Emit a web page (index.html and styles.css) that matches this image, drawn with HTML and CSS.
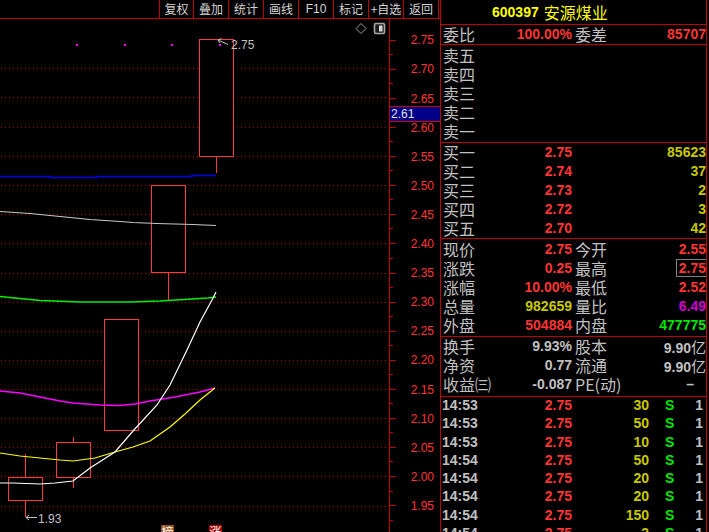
FILE: index.html
```html
<!DOCTYPE html>
<html lang="zh-CN">
<head>
<meta charset="utf-8">
<title>600397 安源煤业</title>
<link rel="stylesheet" href="styles.css">
</head>
<body>
<div class="app">
  <div class="left">
    <div class="toolbar">
      <span class="tb first">复权</span>
      <span class="tb">叠加</span>
      <span class="tb">统计</span>
      <span class="tb">画线</span>
      <span class="tb lat">F10</span>
      <span class="tb">标记</span>
      <span class="tb">+自选</span>
      <span class="tb last">返回</span>
    </div>
    <svg class="chart" width="440" height="513" viewBox="0 19 440 513">
      <g class="grid">
        <line x1="1" x2="389" y1="68.5" y2="68.5"/>
        <line x1="1" x2="389" y1="97.5" y2="97.5"/>
        <line x1="1" x2="389" y1="127.5" y2="127.5"/>
        <line x1="1" x2="389" y1="156.5" y2="156.5"/>
        <line x1="1" x2="389" y1="185.5" y2="185.5"/>
        <line x1="1" x2="389" y1="214.5" y2="214.5"/>
        <line x1="1" x2="389" y1="243.5" y2="243.5"/>
        <line x1="1" x2="389" y1="273.5" y2="273.5"/>
        <line x1="1" x2="389" y1="302.5" y2="302.5"/>
        <line x1="1" x2="389" y1="331.5" y2="331.5"/>
        <line x1="1" x2="389" y1="360.5" y2="360.5"/>
        <line x1="1" x2="389" y1="389.5" y2="389.5"/>
        <line x1="1" x2="389" y1="418.5" y2="418.5"/>
        <line x1="1" x2="389" y1="447.5" y2="447.5"/>
        <line x1="1" x2="389" y1="476.5" y2="476.5"/>
        <line x1="1" x2="389" y1="506.5" y2="506.5"/>
      </g>

      <polyline class="ma ma-blue" points="0,176.5 50,176.5 50,177.5 97,177.5 97,176.5 192,176.5 192,175.5 216,175.5"/>

      <g class="candles">
        <line class="wick" x1="25.5" x2="25.5" y1="454" y2="477"/>
        <line class="wick" x1="25.5" x2="25.5" y1="501" y2="517"/>
        <rect class="candle" x="8.5" y="477.5" width="34" height="23"/>
        <line class="wick" x1="73.5" x2="73.5" y1="437" y2="442"/>
        <line class="wick" x1="73.5" x2="73.5" y1="478" y2="488"/>
        <rect class="candle" x="56.5" y="442.5" width="34" height="35"/>
        <rect class="candle" x="104.5" y="319.5" width="34" height="111"/>
        <line class="wick" x1="168.5" x2="168.5" y1="273" y2="301"/>
        <rect class="candle" x="151.5" y="185.5" width="34" height="87"/>
        <line class="wick" x1="216.5" x2="216.5" y1="157" y2="173"/>
        <rect class="candle" x="199.5" y="39.5" width="34" height="117"/>
      </g>

      <polyline class="ma ma-gray" points="0,211.5 30,213.5 60,216.5 90,219.5 120,221.5 133,222.5 157,223.5 193,224.5 216,225.5"/>
      <polyline class="ma ma-green" points="0,296.5 40,300.5 80,302 130,302 160,301 176,300 192,299 208,298 216,297"/>
      <polyline class="ma ma-magenta" points="0,391 20,393 40,397 60,401 73,403 100,405 120,405.5 135,404 150,401 175,397 200,392 215,388"/>
      <polyline class="ma ma-yellow" points="0,453 20,456 40,458 60,460 73,461 95,458 115,452 133,447 150,441 170,427 185,414 200,400 215,388"/>
      <polyline class="ma ma-white" points="0,483 13,483 40,484 55,483 73,481 90,468 115,452 133,431 157,405 170,385 187,350 200,322 212,300 216,292"/>

      <g class="dots">
        <rect x="76" y="44" width="2" height="2"/>
        <rect x="124" y="44" width="2" height="2"/>
        <rect x="171" y="44" width="2" height="2"/>
        <rect x="219" y="44" width="2" height="2"/>
      </g>

      <path class="arrow" d="M218 40 L228 44.5 M218 40 L221.5 38.5 M218 40 L220 43"/>
      <text class="ann" x="231" y="48.6">2.75</text>
      <path class="arrow" d="M26 517.5 L37 517.5 M26 517.5 L29 515 M26 517.5 L29 520"/>
      <text class="ann" x="38" y="523">1.93</text>

      <polygon class="icon" points="361,23.5 366,28.5 361,33.5 356,28.5"/>
      <rect class="icon-frame" x="374.5" y="23.5" width="10" height="10" rx="1.5"/>
      <rect class="icon-fill" x="379" y="25.5" width="3.5" height="6"/>

      <rect class="badge-b" x="161" y="525" width="13" height="13"/>
      <text class="badge-t" x="161.5" y="536.5">榜</text>
      <rect class="badge-r" x="209" y="525" width="13" height="13"/>
      <text class="badge-t" x="209.5" y="536.5">涨</text>

      <line class="axis-line" x1="389.5" x2="389.5" y1="19" y2="532"/>
      <g class="ticks">
        <line x1="390" x2="396" y1="40.5" y2="40.5"/>
        <line x1="390" x2="393" y1="54.5" y2="54.5"/>
        <line x1="390" x2="396" y1="69.5" y2="69.5"/>
        <line x1="390" x2="393" y1="83.5" y2="83.5"/>
        <line x1="390" x2="396" y1="98.5" y2="98.5"/>
        <line x1="390" x2="396" y1="127.5" y2="127.5"/>
        <line x1="390" x2="393" y1="141.5" y2="141.5"/>
        <line x1="390" x2="396" y1="156.5" y2="156.5"/>
        <line x1="390" x2="393" y1="170.5" y2="170.5"/>
        <line x1="390" x2="396" y1="185.5" y2="185.5"/>
        <line x1="390" x2="393" y1="199.5" y2="199.5"/>
        <line x1="390" x2="396" y1="214.5" y2="214.5"/>
        <line x1="390" x2="393" y1="228.5" y2="228.5"/>
        <line x1="390" x2="396" y1="243.5" y2="243.5"/>
        <line x1="390" x2="393" y1="258.5" y2="258.5"/>
        <line x1="390" x2="396" y1="273.5" y2="273.5"/>
        <line x1="390" x2="393" y1="287.5" y2="287.5"/>
        <line x1="390" x2="396" y1="302.5" y2="302.5"/>
        <line x1="390" x2="393" y1="316.5" y2="316.5"/>
        <line x1="390" x2="396" y1="331.5" y2="331.5"/>
        <line x1="390" x2="393" y1="345.5" y2="345.5"/>
        <line x1="390" x2="396" y1="360.5" y2="360.5"/>
        <line x1="390" x2="393" y1="374.5" y2="374.5"/>
        <line x1="390" x2="396" y1="389.5" y2="389.5"/>
        <line x1="390" x2="393" y1="403.5" y2="403.5"/>
        <line x1="390" x2="396" y1="418.5" y2="418.5"/>
        <line x1="390" x2="393" y1="432.5" y2="432.5"/>
        <line x1="390" x2="396" y1="447.5" y2="447.5"/>
        <line x1="390" x2="393" y1="461.5" y2="461.5"/>
        <line x1="390" x2="396" y1="476.5" y2="476.5"/>
        <line x1="390" x2="393" y1="491.5" y2="491.5"/>
        <line x1="390" x2="396" y1="505.5" y2="505.5"/>
        <line x1="390" x2="393" y1="520.5" y2="520.5"/>
      </g>
      <g class="axlbl">
        <text x="434" y="44.3">2.75</text>
        <text x="434" y="73.4">2.70</text>
        <text x="434" y="102.5">2.65</text>
        <text x="434" y="131.6">2.60</text>
        <text x="434" y="160.7">2.55</text>
        <text x="434" y="189.8">2.50</text>
        <text x="434" y="218.9">2.45</text>
        <text x="434" y="248">2.40</text>
        <text x="434" y="277.1">2.35</text>
        <text x="434" y="306.2">2.30</text>
        <text x="434" y="335.3">2.25</text>
        <text x="434" y="364.4">2.20</text>
        <text x="434" y="393.5">2.15</text>
        <text x="434" y="422.6">2.10</text>
        <text x="434" y="451.7">2.05</text>
        <text x="434" y="480.8">2.00</text>
        <text x="434" y="509.9">1.95</text>
      </g>
      <rect class="cur-box" x="390" y="106.5" width="50" height="15"/>
      <line class="cur-edge" x1="390" x2="440" y1="106.5" y2="106.5"/>
      <line class="cur-edge" x1="390" x2="440" y1="121.5" y2="121.5"/>
      <text class="cur-txt" x="391" y="118.4">2.61</text>
    </svg>
  </div>

  <div class="panel">
    <div class="title"><span class="code">600397</span><span class="name">安源煤业</span></div>

    <div class="sec wb">
      <div class="row"><span class="lb">委比</span><span class="v red">100.00%</span><span class="lb2">委差</span><span class="v red">85707</span></div>
    </div>

    <div class="sec s5">
      <div class="row"><span class="lb">卖五</span><span class="v"></span><span class="lb2"></span><span class="v"></span></div>
      <div class="row"><span class="lb">卖四</span><span class="v"></span><span class="lb2"></span><span class="v"></span></div>
      <div class="row"><span class="lb">卖三</span><span class="v"></span><span class="lb2"></span><span class="v"></span></div>
      <div class="row"><span class="lb">卖二</span><span class="v"></span><span class="lb2"></span><span class="v"></span></div>
      <div class="row"><span class="lb">卖一</span><span class="v"></span><span class="lb2"></span><span class="v"></span></div>
    </div>

    <div class="sec b5">
      <div class="row"><span class="lb">买一</span><span class="v red">2.75</span><span class="lb2"></span><span class="v yel">85623</span></div>
      <div class="row"><span class="lb">买二</span><span class="v red">2.74</span><span class="lb2"></span><span class="v yel">37</span></div>
      <div class="row"><span class="lb">买三</span><span class="v red">2.73</span><span class="lb2"></span><span class="v yel">2</span></div>
      <div class="row"><span class="lb">买四</span><span class="v red">2.72</span><span class="lb2"></span><span class="v yel">3</span></div>
      <div class="row"><span class="lb">买五</span><span class="v red">2.70</span><span class="lb2"></span><span class="v yel">42</span></div>
    </div>

    <div class="sec st1">
      <div class="row"><span class="lb">现价</span><span class="v red">2.75</span><span class="lb2">今开</span><span class="v red">2.55</span></div>
      <div class="row"><span class="lb">涨跌</span><span class="v red">0.25</span><span class="lb2">最高</span><span class="v red"><span class="hibox">2.75</span></span></div>
      <div class="row"><span class="lb">涨幅</span><span class="v red">10.00%</span><span class="lb2">最低</span><span class="v red">2.52</span></div>
      <div class="row"><span class="lb">总量</span><span class="v yel">982659</span><span class="lb2">量比</span><span class="v mag">6.49</span></div>
      <div class="row"><span class="lb">外盘</span><span class="v red">504884</span><span class="lb2">内盘</span><span class="v grn">477775</span></div>
    </div>

    <div class="sec st2">
      <div class="row"><span class="lb">换手</span><span class="v">9.93%</span><span class="lb2">股本</span><span class="v">9.90<span class="cj">亿</span></span></div>
      <div class="row"><span class="lb">净资</span><span class="v">0.77</span><span class="lb2">流通</span><span class="v">9.90<span class="cj">亿</span></span></div>
      <div class="row"><span class="lb">收益㈢</span><span class="v">-0.087</span><span class="lb2">PE(动)</span><span class="v dash">–</span></div>
    </div>

    <div class="ticks-list">
      <div class="trow"><span class="t">14:53</span><span class="p">2.75</span><span class="q">30</span><span class="bs">S</span><span class="n">1</span></div>
      <div class="trow"><span class="t">14:53</span><span class="p">2.75</span><span class="q">50</span><span class="bs">S</span><span class="n">1</span></div>
      <div class="trow"><span class="t">14:53</span><span class="p">2.75</span><span class="q">10</span><span class="bs">S</span><span class="n">1</span></div>
      <div class="trow"><span class="t">14:54</span><span class="p">2.75</span><span class="q">50</span><span class="bs">S</span><span class="n">1</span></div>
      <div class="trow"><span class="t">14:54</span><span class="p">2.75</span><span class="q">20</span><span class="bs">S</span><span class="n">1</span></div>
      <div class="trow"><span class="t">14:54</span><span class="p">2.75</span><span class="q">20</span><span class="bs">S</span><span class="n">1</span></div>
      <div class="trow"><span class="t">14:54</span><span class="p">2.75</span><span class="q">150</span><span class="bs">S</span><span class="n">1</span></div>
      <div class="trow"><span class="t">14:54</span><span class="p">2.75</span><span class="q">3</span><span class="bs">S</span><span class="n">1</span></div>
    </div>
  </div>
</div>
</body>
</html>
```

FILE: styles.css
```css
* { box-sizing: border-box; margin: 0; padding: 0; }
html, body {
  width: 709px;
  height: 532px;
  overflow: hidden;
  background: #000;
}
body {
  font-family: "Liberation Sans", "Noto Sans CJK SC", sans-serif;
  color: #c0c0c0;
}
.app {
  display: flex;
  width: 709px;
  height: 532px;
}

/* ---------- left: toolbar + chart ---------- */
.left {
  width: 440px;
  flex: none;
  display: flex;
  flex-direction: column;
}
.toolbar {
  height: 19px;
  border-bottom: 1px solid #c00000;
  display: flex;
  justify-content: flex-end;
  padding-right: 1px;
}
.tb {
  width: 35px;
  height: 18px;
  border-left: 1px solid #c00000;
  display: flex;
  align-items: center;
  justify-content: center;
  font: 12px/18px "Noto Sans CJK SC", sans-serif;
  color: #d4d4d4;
}
.tb.first { width: 34px; }
.tb.last { width: 36px; border-right: 1px solid #c00000; }
.tb.lat { font: 12px/18px "Liberation Sans", sans-serif; }

.chart { display: block; }
.grid line { stroke: #9a0000; stroke-width: 1; stroke-dasharray: 1 3; }
.axis-line { stroke: #c00000; stroke-width: 1; }
.ticks line { stroke: #c00000; stroke-width: 1; }
.axlbl text {
  font: 12px "Liberation Sans", sans-serif;
  fill: #ff3434;
  text-anchor: end;
}
.candle { fill: #000; stroke: #ff3a3a; stroke-width: 1; }
.wick { stroke: #ff3a3a; stroke-width: 1; }
.ma { fill: none; stroke-width: 1.2; }
.ma-blue { stroke: #0000f0; stroke-width: 1.4; }
.ma-gray { stroke: #c8c8c8; }
.ma-green { stroke: #00f000; stroke-width: 1.4; }
.ma-magenta { stroke: #ff00ff; stroke-width: 1.4; }
.ma-yellow { stroke: #ffff00; }
.ma-white { stroke: #ffffff; }
.dots rect { fill: #ff00ff; }
.arrow { fill: none; stroke: #c0c0c0; stroke-width: 1; }
.ann { font: 12px "Liberation Sans", sans-serif; fill: #c0c0c0; }
.icon { fill: none; stroke: #a0a0a0; stroke-width: 1; }
.icon-frame { fill: #1a1a1a; stroke: #a8a8a8; stroke-width: 1.6; }
.icon-fill { fill: #d8d8d8; }
.badge-b { fill: #9a5418; }
.badge-r { fill: #a80000; }
.badge-t { font: 12px "Noto Sans CJK SC", sans-serif; fill: #ffffff; }
.cur-box { fill: #000088; }
.cur-edge { stroke: #d00000; stroke-width: 1; }
.cur-txt { font: 12px "Liberation Sans", sans-serif; fill: #e0e0e0; }

/* ---------- right: quote panel ---------- */
.panel {
  width: 267px;
  height: 532px;
  flex: none;
  border-left: 1px solid #c00000;
  border-right: 1px solid #c00000;
  display: flex;
  flex-direction: column;
  overflow: hidden;
}
.title {
  height: 25px;
  flex: none;
  border-bottom: 1px solid #c00000;
  padding-left: 51px;
  display: flex;
  align-items: center;
  gap: 5px;
  color: #ffff00;
}
.title .code { font: bold 14px "Liberation Sans", sans-serif; }
.title .name { font: 16px "Noto Sans CJK SC", sans-serif; }

.sec {
  flex: none;
  border-bottom: 1px solid #c00000;
  padding-left: 2px;
}
.wb { height: 20px; }
.s5 { height: 98px; padding-top: 1px; }
.b5 { height: 96px; }
.st1 { height: 98px; padding-top: 1px; }
.st2 { height: 60px; }

.row {
  display: grid;
  grid-template-columns: 60px 69px 64px 70px;
  height: 19px;
  line-height: 19px;
  white-space: nowrap;
}
.lb, .lb2 {
  font: 16px/19px "Noto Sans CJK SC", sans-serif;
  color: #c0c0c0;
}
.lb2 { padding-left: 3px; }
.v {
  font: bold 14px/19px "Liberation Sans", "Noto Sans CJK SC", sans-serif;
  text-align: right;
  color: #c0c0c0;
}
.v .cj { font: 15px/19px "Noto Sans CJK SC", sans-serif; }
.v.dash { padding-right: 12px; }
.red { color: #ff3434; }
.yel { color: #c8c800; }
.mag { color: #d000d0; }
.grn { color: #00e600; }
.hibox {
  display: inline-block;
  height: 18px;
  line-height: 16px;
  border: 1px solid #808080;
  border-right: 0;
  padding-left: 2px;
  vertical-align: top;
}

.ticks-list {
  flex: none;
  margin-top: -1px;
  padding-left: 2px;
}
.trow {
  display: grid;
  grid-template-columns: 60px 69px 77px 26px 31px;
  height: 18.3px;
  line-height: 18.3px;
  font: bold 14px/18.3px "Liberation Sans", sans-serif;
  white-space: nowrap;
}
.trow .t { color: #c0c0c0; margin-left: -1px; }
.trow .p { color: #ff3434; text-align: right; }
.trow .q { color: #c8c800; text-align: right; }
.trow .bs { color: #00e600; padding-left: 16px; }
.trow .n { color: #c0c0c0; text-align: right; padding-right: 3px; }
```
